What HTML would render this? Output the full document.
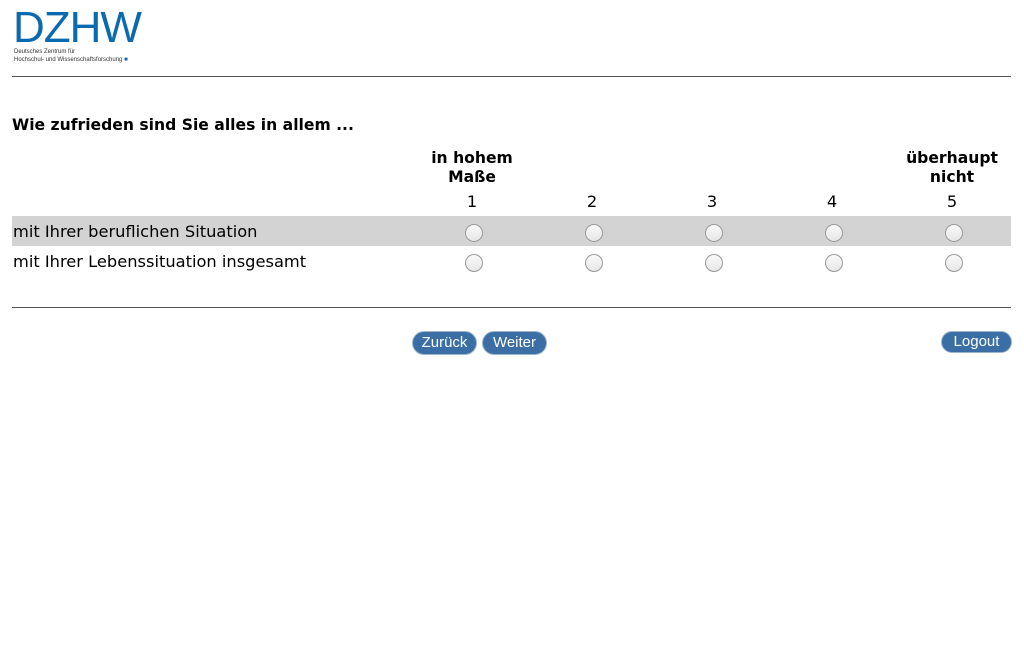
<!DOCTYPE html>
<html><head><meta charset="utf-8"><style>
body{margin:0;width:1024px;height:657px;background:#fff;font-family:"DejaVu Sans",Verdana,sans-serif;color:#000;position:relative;overflow:hidden}
.a{position:absolute}
.hr{position:absolute;left:12px;width:999px;height:1px;background:#555}
.t{font-size:16.25px;white-space:nowrap}
.b{font-weight:bold;font-size:15.6px}
.c{text-align:center;width:120px}
.r{position:absolute;border-radius:50%;border:1px solid #999;background:linear-gradient(#fafafa,#e6e6e6);box-sizing:border-box;width:18px;height:18px}
.btn{position:absolute;background:#3a6ea5;color:#fff;font-family:"Liberation Sans",Arial,sans-serif;font-size:15px;border-radius:12px;border:1px solid #9bb4cf;text-align:center;box-sizing:border-box;line-height:22px}
</style></head><body>
<div class="a" style="left:13px;top:6px;font-family:'Liberation Sans',Arial,sans-serif;font-size:44px;color:#0a6ab0;letter-spacing:-1px;line-height:44px">DZHW</div>
<div class="a" style="left:14px;top:48px;font-family:'Liberation Sans',Arial,sans-serif;font-size:6px;color:#333;line-height:8px">Deutsches Zentrum für<br>Hochschul- und Wissenschaftsforschung <span style="color:#0a6ab0">■</span></div>
<div class="hr" style="top:76px"></div>
<div class="a t b" style="left:12px;top:116px">Wie zufrieden sind Sie alles in allem ...</div>
<div class="a t b c" style="left:412px;top:149px;line-height:19px">in hohem<br>Maße</div>
<div class="a t b c" style="left:892px;top:149px;line-height:19px">überhaupt<br>nicht</div>
<div class="a t c" style="left:412px;top:192px">1</div>
<div class="a t c" style="left:532px;top:192px">2</div>
<div class="a t c" style="left:652px;top:192px">3</div>
<div class="a t c" style="left:772px;top:192px">4</div>
<div class="a t c" style="left:892px;top:192px">5</div>
<div class="a" style="left:12px;top:216px;width:999px;height:30px;background:#d3d3d3"></div>
<div class="a t" style="left:13px;top:222px">mit Ihrer beruflichen Situation</div>
<div class="a t" style="left:13px;top:252px">mit Ihrer Lebenssituation insgesamt</div>
<div class="r" style="left:465px;top:224px"></div><div class="r" style="left:585px;top:224px"></div><div class="r" style="left:705px;top:224px"></div><div class="r" style="left:825px;top:224px"></div><div class="r" style="left:945px;top:224px"></div>
<div class="r" style="left:465px;top:254px"></div><div class="r" style="left:585px;top:254px"></div><div class="r" style="left:705px;top:254px"></div><div class="r" style="left:825px;top:254px"></div><div class="r" style="left:945px;top:254px"></div>
<div class="hr" style="top:307px"></div>
<div class="btn" style="left:412px;top:331px;width:65px;height:24px">Zurück</div>
<div class="btn" style="left:482px;top:331px;width:65px;height:24px">Weiter</div>
<div class="btn" style="left:941px;top:331px;width:71px;height:22px;line-height:20px">Logout</div>
</body></html>
